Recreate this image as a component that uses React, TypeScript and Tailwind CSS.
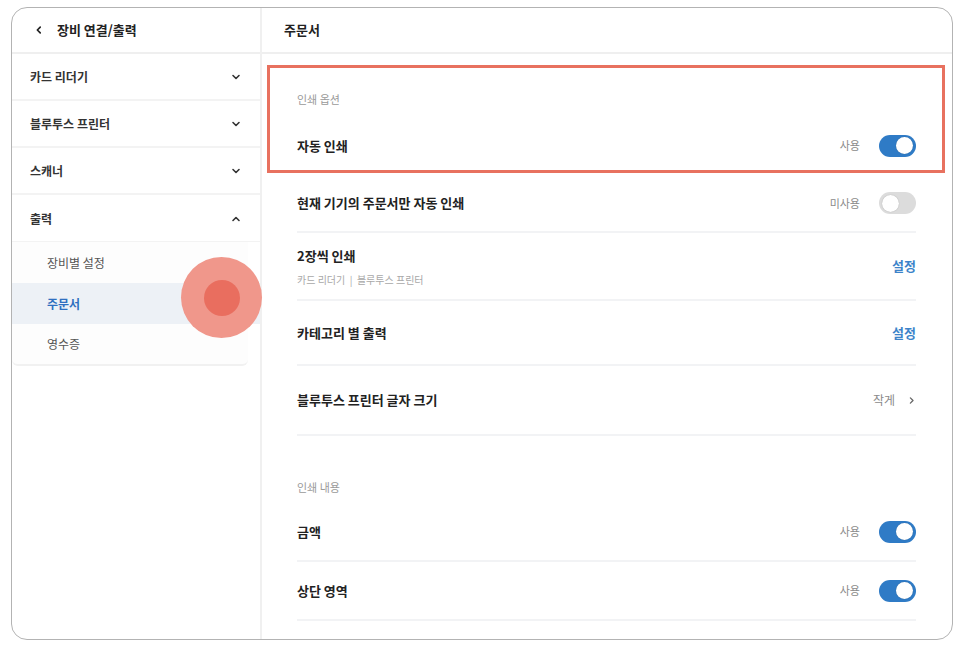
import React from "react";

const font = { fontFamily: '"Noto Sans CJK KR", "Noto Sans", sans-serif' };

const Chevron = ({ up = false }: { up?: boolean }) => (
  <svg width="12" height="12" viewBox="0 0 24 24" fill="none" stroke="#333" strokeWidth="3.2" strokeLinecap="round" strokeLinejoin="round">
    <path d={up ? "M6 15l6-6 6 6" : "M6 9l6 6 6-6"} />
  </svg>
);

const Toggle = ({ on }: { on: boolean }) => (
  <div
    className={`w-[37px] h-[22px] rounded-full flex items-center px-[3px] ${
      on ? "bg-[#2f7bc6] justify-end" : "bg-[#dcdcdc] justify-start"
    }`}
  >
    <div className="w-[17px] h-[17px] rounded-full bg-white shadow-[0_0_1px_rgba(0,0,0,0.3)]" />
  </div>
);

const ToggleRow = ({
  title,
  on,
  border = true,
  short = false,
}: {
  title: string;
  on: boolean;
  border?: boolean;
  short?: boolean;
}) => (
  <div
    className={`${short ? "h-[58px]" : "h-[59px]"} flex items-center justify-between ${
      border ? "border-b-2 border-[#f2f3f5]" : ""
    }`}
  >
    <span className="text-[13px] font-bold text-[#222]">{title}</span>
    <div className="flex items-center gap-[19px]">
      <span className="text-[11px] text-[#8a8a8a]">{on ? "사용" : "미사용"}</span>
      <Toggle on={on} />
    </div>
  </div>
);

const leftItems = ["카드 리더기", "블루투스 프린터", "스캐너"];

export default function App() {
  return (
    <div className="w-[958px] h-[652px] bg-white pl-[11px] pt-[7px] pr-[5px] pb-[12px]" style={font}>
      <div className="relative w-full h-full border border-[#b3b3b3] rounded-[16px] overflow-hidden flex bg-white">
        {/* LEFT MENU */}
        <div className="w-[250px] border-r-2 border-[#f0f0f0] flex flex-col">
          <div className="h-[46px] flex items-center pl-[22px] pb-[1px] border-b-2 border-[#efefef] shrink-0">
            <svg width="10" height="10" viewBox="0 0 24 24" fill="none" stroke="#222" strokeWidth="4" strokeLinecap="round" strokeLinejoin="round">
              <path d="M15 5l-7 7 7 7" />
            </svg>
            <span className="ml-[13px] text-[13px] font-bold text-[#222]">장비 연결/출력</span>
          </div>
          {leftItems.map((item) => (
            <div key={item} className="h-[47px] flex items-center justify-between pl-[18px] pr-[18px] pt-[1px] border-b-2 border-[#f3f3f3]">
              <span className="text-[12px] font-bold text-[#333]">{item}</span>
              <Chevron />
            </div>
          ))}
          <div className="h-[47px] flex items-center justify-between pl-[18px] pr-[18px] pt-[1px] border-b border-[#f3f3f3]">
            <span className="text-[12px] font-bold text-[#333]">출력</span>
            <Chevron up />
          </div>
          <div className="mr-[12px] bg-[#fdfdfd] rounded-b-[6px] border-b-2 border-[#f1f1f1]">
            <div className="h-[41px] flex items-center pl-[35px] text-[12px] text-[#555]">장비별 설정</div>
            <div className="h-[41px] flex items-center pl-[35px] text-[12px] font-bold text-[#2f6fc0] bg-[#edf1f6] -mr-[12px]">주문서</div>
            <div className="h-[40px] flex items-center pl-[35px] text-[12px] text-[#555]">영수증</div>
          </div>
        </div>

        {/* RIGHT CONTENT */}
        <div className="flex-1 flex flex-col">
          <div className="h-[46px] flex items-center pl-[22px] pb-[1px] border-b-2 border-[#efefef] shrink-0">
            <span className="text-[13px] font-bold text-[#222]">주문서</span>
          </div>
          <div className="pl-[35px] pr-[36px]">
            <div className="relative">
              <div className="pt-[35px] text-[11px] text-[#9a9a9a] leading-[20px]">인쇄 옵션</div>
              <div className="h-[7px]" />
              <ToggleRow title="자동 인쇄" on={true} border={false} />
              {/* annotation box */}
              <div className="absolute -left-[30px] -right-[29px] top-[11px] h-[108px] border-[3px] border-[#e8715f] pointer-events-none" />
            </div>
            <ToggleRow title="현재 기기의 주문서만 자동 인쇄" on={false} short />
            <div className="h-[68px] flex items-center justify-between border-b-2 border-[#f2f3f5]">
              <div className="flex flex-col">
                <span className="text-[13px] font-bold text-[#222] leading-[20px]">2장씩 인쇄</span>
                <span className="mt-[6px] text-[10px] text-[#a8a8a8]">카드 리더기&nbsp; | &nbsp;블루투스 프린터</span>
              </div>
              <span className="text-[13px] font-bold text-[#3c83c9]">설정</span>
            </div>
            <div className="h-[65px] flex items-center justify-between border-b-2 border-[#f2f3f5]">
              <span className="text-[13px] font-bold text-[#222]">카테고리 별 출력</span>
              <span className="text-[13px] font-bold text-[#3c83c9]">설정</span>
            </div>
            <div className="h-[70px] flex items-center justify-between border-b-2 border-[#f2f3f5]">
              <span className="text-[13px] font-bold text-[#222]">블루투스 프린터 글자 크기</span>
              <div className="flex items-center gap-[12px] text-[12px] text-[#8a8a8a]">
                <span>작게</span>
                <svg width="9" height="9" viewBox="0 0 24 24" fill="none" stroke="#666" strokeWidth="3.5" strokeLinecap="round" strokeLinejoin="round">
                  <path d="M9 5l7 7-7 7" />
                </svg>
              </div>
            </div>
            <div className="pt-[41px] text-[11px] text-[#9a9a9a] leading-[20px]">인쇄 내용</div>
            <div className="h-[6px]" />
            <ToggleRow title="금액" on={true} />
            <ToggleRow title="상단 영역" on={true} />
          </div>
        </div>

        {/* touch indicator */}
        <div className="absolute left-[169px] top-[249px] w-[81px] h-[81px] rounded-full bg-[#f0978b] flex items-center justify-center">
          <div className="w-[36px] h-[36px] rounded-full bg-[#e96e5f]" />
        </div>
      </div>
    </div>
  );
}
